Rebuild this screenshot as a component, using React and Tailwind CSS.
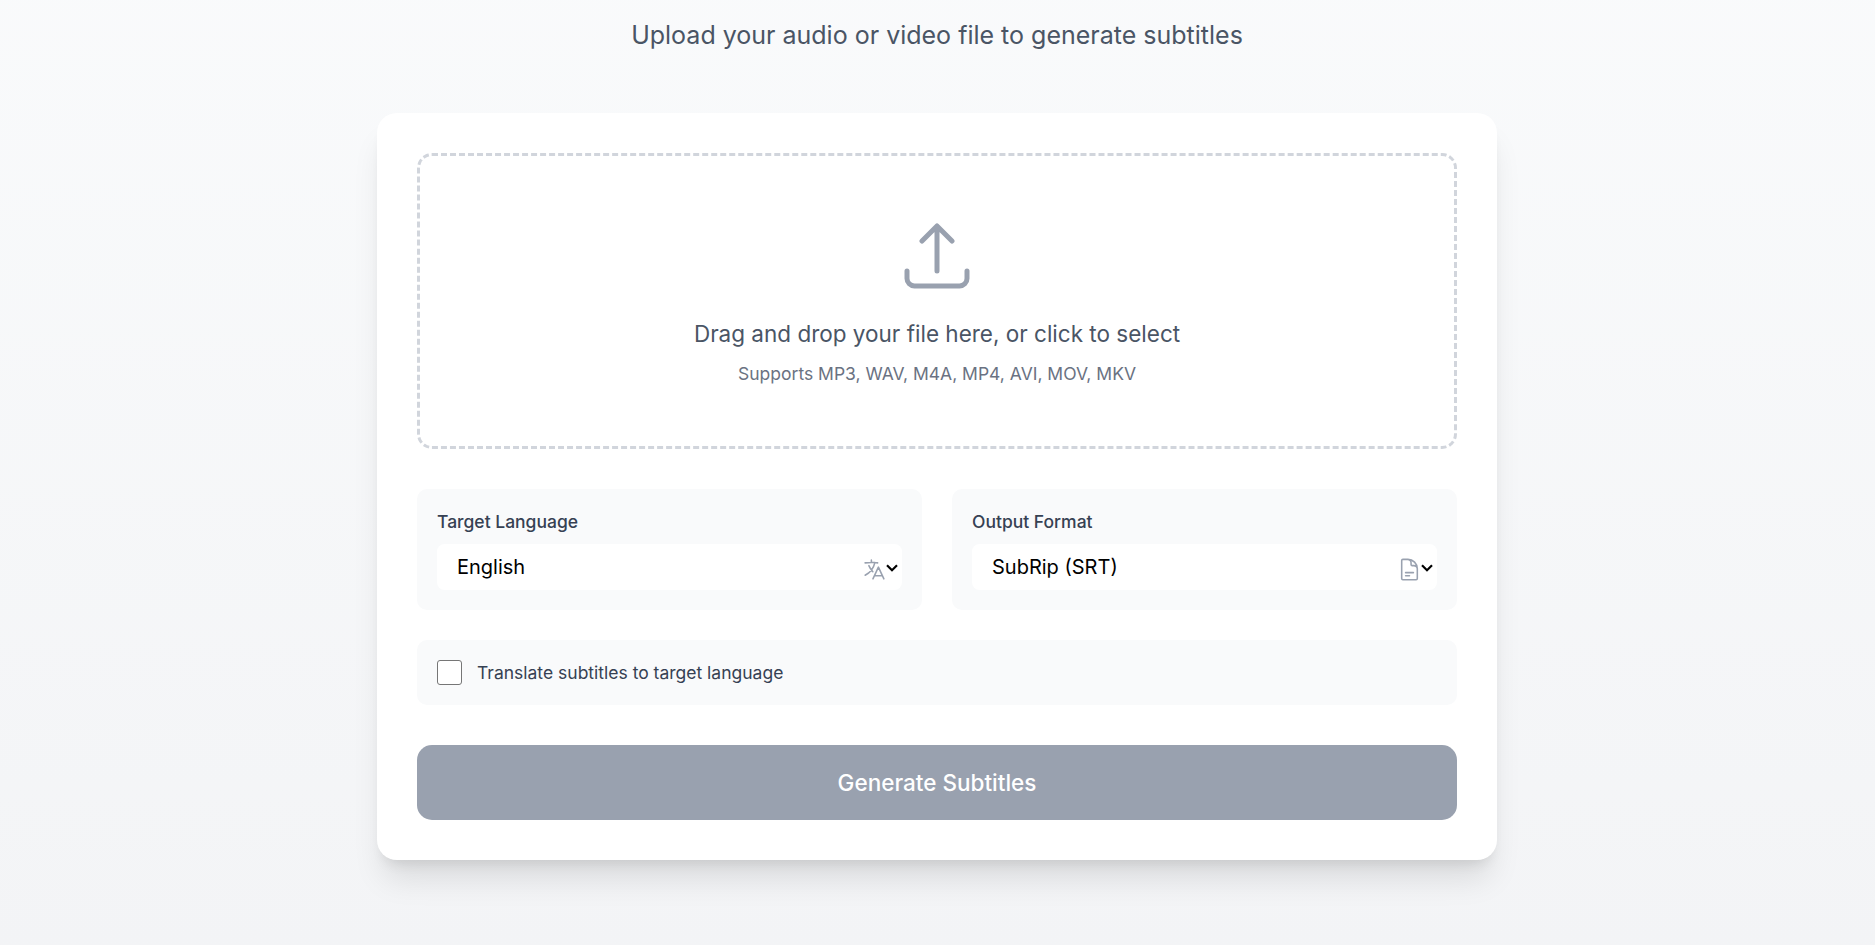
import React from "react";

function StrokeIcon({ d, className, strokeWidth = 1.5 }) {
  return (
    <svg
      viewBox="0 0 24 24"
      fill="none"
      stroke="currentColor"
      strokeWidth={strokeWidth}
      strokeLinecap="round"
      strokeLinejoin="round"
      className={className}
      aria-hidden="true"
    >
      <path d={d} />
    </svg>
  );
}

const UPLOAD =
  "M3 16.5v2.25A2.25 2.25 0 0 0 5.25 21h13.5A2.25 2.25 0 0 0 21 18.75V16.5m-13.5-9L12 3m0 0 4.5 4.5M12 3v13.5";
const LANGUAGE =
  "m10.5 21 5.25-11.25L21 21m-9-3h7.5M3 5.621a48.474 48.474 0 0 1 6-.371m0 0c1.12 0 2.233.038 3.334.114M9 5.25V3m3.334 2.364C11.176 10.658 7.69 15.08 3 17.502m9.334-12.138c.896.061 1.785.147 2.666.257m-4.589 8.495a18.023 18.023 0 0 1-3.827-5.802";
const DOCUMENT =
  "M19.5 14.25v-2.625a3.375 3.375 0 0 0-3.375-3.375h-1.5A1.125 1.125 0 0 1 13.5 7.125v-1.5a3.375 3.375 0 0 0-3.375-3.375H8.25m0 12.75h7.5m-7.5 3H12M10.5 2.25H5.625c-.621 0-1.125.504-1.125 1.125v17.25c0 .621.504 1.125 1.125 1.125h12.75c.621 0 1.125-.504 1.125-1.125V11.25a9 9 0 0 0-9-9Z";

function SelectCard({ label, icon, options }) {
  return (
    <div className="rounded-[10px] bg-gray-50 p-5">
      <label className="mb-2.5 block text-[17.5px] leading-[25px] font-medium text-gray-700">
        {label}
      </label>
      <div className="relative">
        <select className="block h-[46px] w-full appearance-none rounded-[7.5px] bg-white px-5 text-[20px] leading-[30px] text-black">
          {options.map((o) => (
            <option key={o}>{o}</option>
          ))}
        </select>
        <StrokeIcon
          d={icon}
          className="pointer-events-none absolute top-[13px] right-[15px] h-[25px] w-[25px] text-gray-400"
        />
        <svg
          viewBox="0 0 12 8"
          fill="none"
          stroke="black"
          strokeWidth="2.2"
          className="pointer-events-none absolute top-5 right-1 h-2 w-3"
          aria-hidden="true"
        >
          <path d="M1 1.3 6 6.2 11 1.3" />
        </svg>
      </div>
    </div>
  );
}

export default function App() {
  return (
    <div className="min-h-screen bg-linear-to-b from-gray-50 to-gray-100 pt-[18px] pr-px font-['Inter',sans-serif]">
      <p className="text-center text-[25px] leading-[35px] text-gray-600">
        Upload your audio or video file to generate subtitles
      </p>
      <main className="mx-auto mt-15 w-[1120px] rounded-[20px] bg-white p-10 shadow-[0_25px_31px_-6px_rgba(0,0,0,0.1),0_10px_12.5px_-7.5px_rgba(0,0,0,0.1)]">
        <div className="flex flex-col items-center rounded-[15px] border-3 border-dashed border-gray-300 py-15">
          <StrokeIcon d={UPLOAD} className="h-20 w-20 text-gray-400" />
          <p className="mt-5 text-[22.5px] leading-[35px] text-gray-600">
            Drag and drop your file here, or click to select
          </p>
          <p className="mt-2.5 text-[17.5px] leading-[25px] text-gray-500">
            Supports MP3, WAV, M4A, MP4, AVI, MOV, MKV
          </p>
        </div>

        <div className="mt-10 grid grid-cols-2 gap-[30px]">
          <SelectCard label="Target Language" icon={LANGUAGE} options={["English"]} />
          <SelectCard label="Output Format" icon={DOCUMENT} options={["SubRip (SRT)"]} />
        </div>

        <label className="mt-[30px] flex items-center gap-[15px] rounded-[10px] bg-gray-50 p-5 text-[17.5px] leading-[25px] text-gray-700">
          <input
            type="checkbox"
            className="h-[25px] w-[25px] appearance-none rounded-[3px] border border-[#767676] bg-white"
          />
          Translate subtitles to target language
        </label>

        <button className="mt-10 block h-[75px] w-full rounded-[15px] bg-gray-400 text-[22.5px] leading-[35px] font-medium text-white">
          Generate Subtitles
        </button>
      </main>
    </div>
  );
}
